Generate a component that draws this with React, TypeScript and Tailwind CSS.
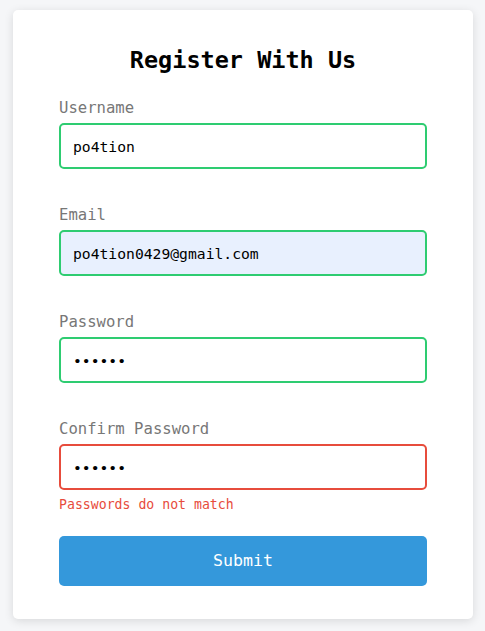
import React from "react";

const mono = { fontFamily: '"DejaVu Sans Mono", "Liberation Mono", monospace' };

function Field({
  label,
  value,
  type = "text",
  border,
  bg = "bg-white",
  className = "",
}: {
  label: string;
  value: string;
  type?: string;
  border: string;
  bg?: string;
  className?: string;
}) {
  return (
    <div className={`flex flex-col ${className}`}>
      <label className="pt-[2px] text-[15.6px] leading-[20px] text-[#777777]">{label}</label>
      <input
        readOnly
        type={type}
        value={value}
        style={mono}
        className={`mt-[5px] h-[46px] w-full rounded-[5px] border-2 ${border} ${bg} pl-[12px] text-[14.7px] text-black outline-none`}
      />
    </div>
  );
}

export default function App() {
  return (
    <div className="min-h-[631px] w-[485px] bg-[#f5f6f8] pt-[10px]" style={mono}>
      <div className="ml-[13px] flex w-[460px] flex-col rounded-[5px] bg-white px-[46px] pb-[33px] pt-[36px] shadow-[0_2px_10px_rgba(0,0,0,0.12)]">
        <h2 className="text-center text-[23.5px] font-bold leading-[28px] text-black">
          Register With Us
        </h2>
        <Field className="mt-[22px]" label="Username" value="po4tion" border="border-[#2ecc71]" />
        <Field
          className="mt-[34px]"
          label="Email"
          value="po4tion0429@gmail.com"
          border="border-[#2ecc71]"
          bg="bg-[#e8f0fe]"
        />
        <Field className="mt-[34px]" label="Password" value="123456" type="password" border="border-[#2ecc71]" />
        <Field
          className="mt-[34px]"
          label="Confirm Password"
          value="123457"
          type="password"
          border="border-[#e74c3c]"
        />
        <p className="mt-[7px] text-[13.2px] leading-[16px] text-[#e74c3c]">Passwords do not match</p>
        <button
          style={mono}
          className="mt-[23px] h-[50px] w-full rounded-[5px] bg-[#3498db] text-[16.6px] text-white"
        >
          Submit
        </button>
      </div>
    </div>
  );
}
